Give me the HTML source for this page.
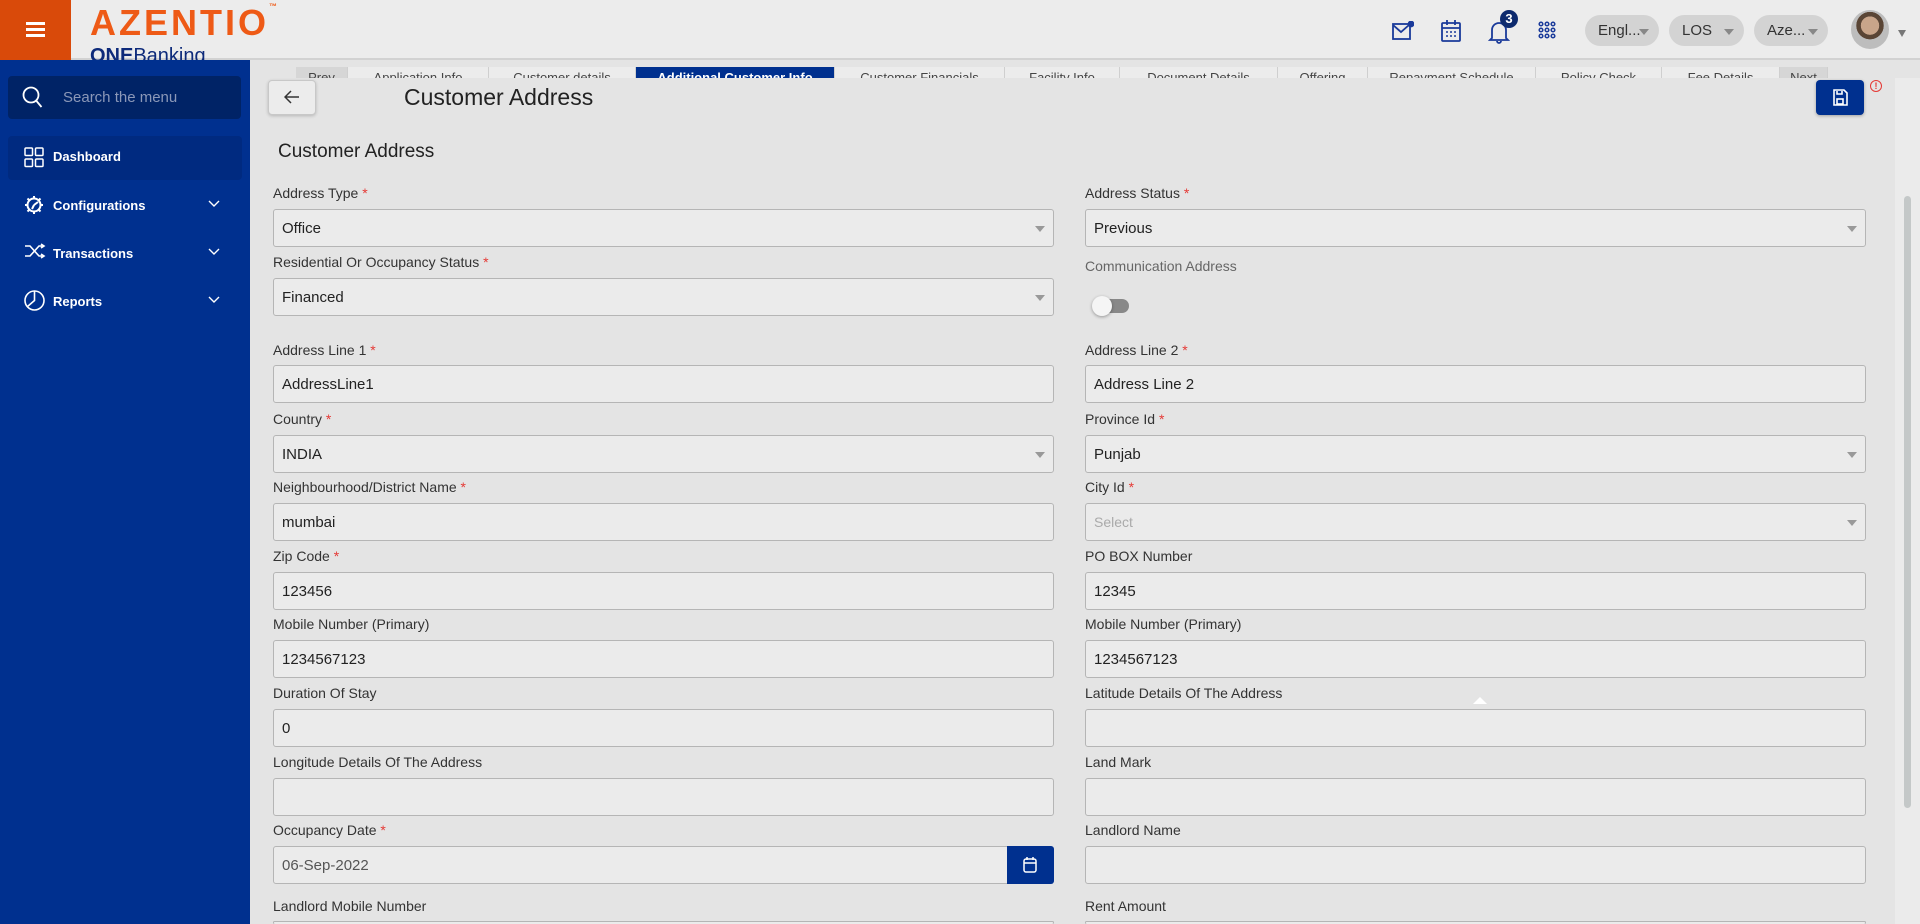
<!DOCTYPE html>
<html style="overflow:hidden;height:924px"><head><meta charset="utf-8"><style>
*{box-sizing:border-box;margin:0;padding:0}
html,body{width:1920px;height:924px;overflow:hidden}
body{background:#e4e4e4;font-family:"Liberation Sans",sans-serif}
#w{position:relative;width:1920px;height:924px;overflow:hidden}
.a{position:absolute}
.hdr{left:0;top:0;width:1920px;height:60px;background:#ececec;border-bottom:2px solid #d2d2d2}
.side{left:0;top:60px;width:250px;height:864px;background:#00308f}
.tabs{top:67px;height:12px;overflow:hidden;font-size:13px;color:#444}
.tab{position:absolute;top:0;height:20px;background:#ececec;border-right:1px solid #cfcfcf;text-align:center;padding-top:3px;white-space:nowrap;overflow:hidden}
.content{left:250px;top:78px;width:1645px;height:846px;background:#e4e4e4}
.lbl{font-size:14px;color:#333}
.lbl b{color:#e53935;font-weight:normal}
.inp{height:38px;border:1px solid #b5b5b5;border-radius:3px;background:#ebebeb;font-size:15px;color:#222;padding:10px 8px}
.arr{position:absolute;right:8px;top:16px;width:0;height:0;border-left:5px solid transparent;border-right:5px solid transparent;border-top:6px solid #999}
.nav{color:#fff;font-size:13px;font-weight:bold}
.pill{top:15px;height:31px;background:#d3d3d3;border-radius:16px;font-size:15px;color:#333;padding-top:7px;padding-left:13px}
.pill i{position:absolute;right:10px;top:14px;border-left:5px solid transparent;border-right:5px solid transparent;border-top:6px solid #888}
</style></head><body><div id="w">
<div class="a hdr"></div>
<div class="a" style="left:0;top:0;width:71px;height:60px;background:#d94a0a"></div>
<div class="a" style="left:26px;top:22px;width:19px;height:3px;background:#fff;box-shadow:0 6px 0 #fff,0 12px 0 #fff"></div>
<div class="a" style="left:90px;top:2px;font-size:36px;font-weight:bold;color:#ee5a16;letter-spacing:3px">AZENTIO<span style="font-size:8px;vertical-align:top">™</span></div>
<div class="a" style="left:90px;top:44px;height:16px;overflow:hidden;font-size:20px;color:#0d2a7a;line-height:24px"><b>ONE</b>Banking</div>

<svg class="a" style="left:1392px;top:21px" width="22" height="20" viewBox="0 0 22 20" fill="none" stroke="#1a3a9a" stroke-width="1.8"><rect x="1" y="3" width="17" height="15"/><path d="M1 4l8 7 8-7"/><circle cx="19" cy="3" r="2.5" fill="#1a3a9a"/></svg>
<svg class="a" style="left:1441px;top:19px" width="20" height="23" viewBox="0 0 20 23" fill="none" stroke="#1a3a9a" stroke-width="1.8"><rect x="1" y="4" width="18" height="18" rx="1"/><path d="M1 9h18M6 1v5M14 1v5"/><path d="M5 13h2M9 13h2M13 13h2M5 17h2M9 17h2M13 17h2" stroke-width="1.5"/></svg>
<svg class="a" style="left:1488px;top:18px" width="22" height="26" viewBox="0 0 22 26" fill="none" stroke="#1a3a9a" stroke-width="1.8"><path d="M4 20V12a7 7 0 0114 0v8l2 2H2z"/><path d="M9 23a2 2 0 004 0"/></svg>
<div class="a" style="left:1500px;top:10px;width:18px;height:18px;border-radius:9px;background:#0d2a6e;color:#fff;font-size:13px;font-weight:bold;text-align:center;line-height:18px">3</div>
<svg class="a" style="left:1538px;top:21px" width="18" height="18" viewBox="0 0 18 18" fill="none" stroke="#1a3a9a" stroke-width="1.5"><circle cx="3" cy="3" r="1.8"/><circle cx="9" cy="3" r="1.8"/><circle cx="15" cy="3" r="1.8"/><circle cx="3" cy="9" r="1.8"/><circle cx="9" cy="9" r="1.8"/><circle cx="15" cy="9" r="1.8"/><circle cx="3" cy="15" r="1.8"/><circle cx="9" cy="15" r="1.8"/><circle cx="15" cy="15" r="1.8"/></svg>
<div class="a pill" style="left:1585px;width:74px">Engl...<i></i></div>
<div class="a pill" style="left:1669px;width:75px">LOS<i></i></div>
<div class="a pill" style="left:1754px;width:74px">Aze...<i></i></div>
<div class="a" style="left:1851px;top:10px;width:38px;height:39px;border-radius:50%;background:radial-gradient(circle at 50% 40%,#c9a58a 0 30%,#5a4535 31% 45%,#bdbdbd 46%)"></div>
<div class="a" style="left:1898px;top:30px;border-left:4px solid transparent;border-right:4px solid transparent;border-top:7px solid #777"></div>

<div class="a side"></div>
<div class="a" style="left:8px;top:76px;width:233px;height:43px;background:#002366;border-radius:4px"></div>
<svg class="a" style="left:22px;top:86px" width="22" height="24" viewBox="0 0 22 24" fill="none" stroke="#fff" stroke-width="1.8"><circle cx="9" cy="9" r="7.5"/><path d="M14.5 15l5 6"/></svg>
<div class="a" style="left:63px;top:89px;font-size:15px;color:#8b98b8">Search the menu</div>
<div class="a" style="left:8px;top:136px;width:234px;height:44px;background:#002a80;border-radius:4px"></div>
<svg class="a" style="left:24px;top:147px" width="20" height="21" viewBox="0 0 20 21" fill="none" stroke="#fff" stroke-width="1.5"><rect x="1" y="1" width="7.5" height="7.5" rx="1"/><rect x="11.5" y="1" width="7.5" height="7.5" rx="1"/><rect x="1" y="12" width="7.5" height="7.5" rx="1"/><rect x="11.5" y="12" width="7.5" height="7.5" rx="1"/></svg>
<div class="a nav" style="left:53px;top:149px">Dashboard</div>
<svg class="a" style="left:24px;top:195px" width="20" height="20" viewBox="0 0 20 20" fill="none" stroke="#fff" stroke-width="2"><circle cx="10" cy="10" r="6.5"/><path d="M10 1v3M10 16v3M1 10h3M16 10h3M3.5 3.5l2 2M14.5 14.5l2 2M3.5 16.5l2-2M14.5 5.5l2-2M10 10l4-3M10 10l-2 4"/></svg>
<div class="a nav" style="left:53px;top:198px">Configurations</div>
<svg class="a" style="left:24px;top:243px" width="22" height="16" viewBox="0 0 22 16" fill="none" stroke="#fff" stroke-width="1.6"><path d="M1 3h5l9 10h5M1 13h5l9-10h5M17 1l3 2-3 2M17 11l3 2-3 2"/></svg>
<div class="a nav" style="left:53px;top:246px">Transactions</div>
<svg class="a" style="left:24px;top:290px" width="21" height="21" viewBox="0 0 21 21" fill="none" stroke="#fff" stroke-width="1.6"><circle cx="10.5" cy="10.5" r="9.5"/><path d="M10.5 1v9.5l-7 6"/></svg>
<div class="a nav" style="left:53px;top:294px">Reports</div>
<svg class="a" style="left:208px;top:200px" width="12" height="8" viewBox="0 0 12 8" fill="none" stroke="#fff" stroke-width="1.4"><path d="M1 1l5 5 5-5"/></svg>
<svg class="a" style="left:208px;top:248px" width="12" height="8" viewBox="0 0 12 8" fill="none" stroke="#fff" stroke-width="1.4"><path d="M1 1l5 5 5-5"/></svg>
<svg class="a" style="left:208px;top:296px" width="12" height="8" viewBox="0 0 12 8" fill="none" stroke="#fff" stroke-width="1.4"><path d="M1 1l5 5 5-5"/></svg>

<div class="a tabs" style="left:262px;width:1620px">
<div class="tab" style="left:34px;width:52px;background:#d6d6d6">Prev</div>
<div class="tab" style="left:86px;width:141px">Application Info</div>
<div class="tab" style="left:227px;width:147px">Customer details</div>
<div class="tab" style="left:374px;width:199px;background:#00308f;color:#fff;font-weight:bold">Additional Customer Info</div>
<div class="tab" style="left:573px;width:170px">Customer Financials</div>
<div class="tab" style="left:743px;width:115px">Facility Info</div>
<div class="tab" style="left:858px;width:158px">Document Details</div>
<div class="tab" style="left:1016px;width:90px">Offering</div>
<div class="tab" style="left:1106px;width:168px">Repayment Schedule</div>
<div class="tab" style="left:1274px;width:126px">Policy Check</div>
<div class="tab" style="left:1400px;width:118px">Fee Details</div>
<div class="tab" style="left:1518px;width:48px;background:#d6d6d6">Next</div>
</div>

<div class="a content"></div>
<div class="a" style="left:1895px;top:78px;width:25px;height:846px;background:#ebebeb"></div>
<div class="a" style="left:1904px;top:196px;width:7px;height:612px;background:#c4c8c8;border-radius:4px"></div>

<div class="a" style="left:268px;top:80px;width:48px;height:35px;background:#ececec;border:1px solid #c8c8c8;border-radius:4px;box-shadow:0 1px 3px rgba(0,0,0,.2)"></div>
<svg class="a" style="left:284px;top:90px" width="16" height="14" viewBox="0 0 16 14" fill="none" stroke="#333" stroke-width="1.5"><path d="M15 7H2M7 1L1 7l6 6"/></svg>
<div class="a" style="left:404px;top:84px;font-size:23px;color:#222">Customer Address</div>
<div class="a" style="left:1816px;top:80px;width:48px;height:35px;background:#00308f;border-radius:4px;box-shadow:0 1px 3px rgba(0,0,0,.3)"></div>
<svg class="a" style="left:1832px;top:89px" width="16" height="17" viewBox="0 0 16 17" fill="none" stroke="#fff" stroke-width="1.6"><path d="M2 1h10l3 3v12H2z"/><rect x="5" y="10" width="6" height="5"/><path d="M5 2v3h5V2"/></svg>
<div class="a" style="left:1870px;top:80px;width:12px;height:12px;border:1.3px solid #e53935;border-radius:50%;color:#e53935;font-size:9px;text-align:center;line-height:10px;font-weight:bold">!</div>

<div class="a" style="left:278px;top:141px;font-size:19px;color:#222;font-weight:500">Customer Address</div>

<div class="a lbl" style="left:273px;top:185px">Address Type <b>*</b></div>
<div class="a inp" style="left:273px;top:209px;width:781px">Office<i class="arr"></i></div>
<div class="a lbl" style="left:273px;top:254px">Residential Or Occupancy Status <b>*</b></div>
<div class="a inp" style="left:273px;top:278px;width:781px">Financed<i class="arr"></i></div>
<div class="a lbl" style="left:273px;top:342px">Address Line 1 <b>*</b></div>
<div class="a inp" style="left:273px;top:365px;width:781px">AddressLine1</div>
<div class="a lbl" style="left:273px;top:411px">Country <b>*</b></div>
<div class="a inp" style="left:273px;top:435px;width:781px">INDIA<i class="arr"></i></div>
<div class="a lbl" style="left:273px;top:479px">Neighbourhood/District Name <b>*</b></div>
<div class="a inp" style="left:273px;top:503px;width:781px">mumbai</div>
<div class="a lbl" style="left:273px;top:548px">Zip Code <b>*</b></div>
<div class="a inp" style="left:273px;top:572px;width:781px">123456</div>
<div class="a lbl" style="left:273px;top:616px">Mobile Number (Primary)</div>
<div class="a inp" style="left:273px;top:640px;width:781px">1234567123</div>
<div class="a lbl" style="left:273px;top:685px">Duration Of Stay</div>
<div class="a inp" style="left:273px;top:709px;width:781px">0</div>
<div class="a lbl" style="left:273px;top:754px">Longitude Details Of The Address</div>
<div class="a inp" style="left:273px;top:778px;width:781px"></div>
<div class="a lbl" style="left:273px;top:822px">Occupancy Date <b>*</b></div>
<div class="a inp" style="left:273px;top:846px;width:735px;color:#555;border-radius:3px 0 0 3px">06-Sep-2022</div>
<div class="a" style="left:1007px;top:846px;width:47px;height:38px;background:#00308f;border-radius:0 3px 3px 0"></div>
<svg class="a" style="left:1023px;top:856px" width="14" height="17" viewBox="0 0 14 17" fill="none" stroke="#fff" stroke-width="1.5"><rect x="1" y="3" width="12" height="13" rx="2"/><path d="M1 7h12M4 1v3M10 1v3"/></svg>
<div class="a lbl" style="left:273px;top:898px">Landlord Mobile Number</div>
<div class="a inp" style="left:273px;top:921px;width:781px;height:3px;padding:0;border-bottom:none"></div>

<div class="a lbl" style="left:1085px;top:185px">Address Status <b>*</b></div>
<div class="a inp" style="left:1085px;top:209px;width:781px">Previous<i class="arr"></i></div>
<div class="a lbl" style="left:1085px;top:258px;color:#666">Communication Address</div>
<div class="a" style="left:1097px;top:299px;width:32px;height:14px;background:#888;border-radius:7px"></div>
<div class="a" style="left:1092px;top:296px;width:20px;height:20px;background:#f5f5f5;border-radius:50%;box-shadow:0 1px 3px rgba(0,0,0,.35)"></div>
<div class="a lbl" style="left:1085px;top:342px">Address Line 2 <b>*</b></div>
<div class="a inp" style="left:1085px;top:365px;width:781px">Address Line 2</div>
<div class="a lbl" style="left:1085px;top:411px">Province Id <b>*</b></div>
<div class="a inp" style="left:1085px;top:435px;width:781px">Punjab<i class="arr"></i></div>
<div class="a lbl" style="left:1085px;top:479px">City Id <b>*</b></div>
<div class="a inp" style="left:1085px;top:503px;width:781px;color:#aaa;font-size:14px">Select<i class="arr"></i></div>
<div class="a lbl" style="left:1085px;top:548px">PO BOX Number</div>
<div class="a inp" style="left:1085px;top:572px;width:781px">12345</div>
<div class="a lbl" style="left:1085px;top:616px">Mobile Number (Primary)</div>
<div class="a inp" style="left:1085px;top:640px;width:781px">1234567123</div>
<div class="a lbl" style="left:1085px;top:685px">Latitude Details Of The Address</div>
<div class="a" style="left:1473px;top:697px;border-left:7px solid transparent;border-right:7px solid transparent;border-bottom:7px solid #fff"></div>
<div class="a inp" style="left:1085px;top:709px;width:781px"></div>
<div class="a lbl" style="left:1085px;top:754px">Land Mark</div>
<div class="a inp" style="left:1085px;top:778px;width:781px"></div>
<div class="a lbl" style="left:1085px;top:822px">Landlord Name</div>
<div class="a inp" style="left:1085px;top:846px;width:781px"></div>
<div class="a lbl" style="left:1085px;top:898px">Rent Amount</div>
<div class="a inp" style="left:1085px;top:921px;width:781px;height:3px;padding:0;border-bottom:none"></div>
</div></body></html>
